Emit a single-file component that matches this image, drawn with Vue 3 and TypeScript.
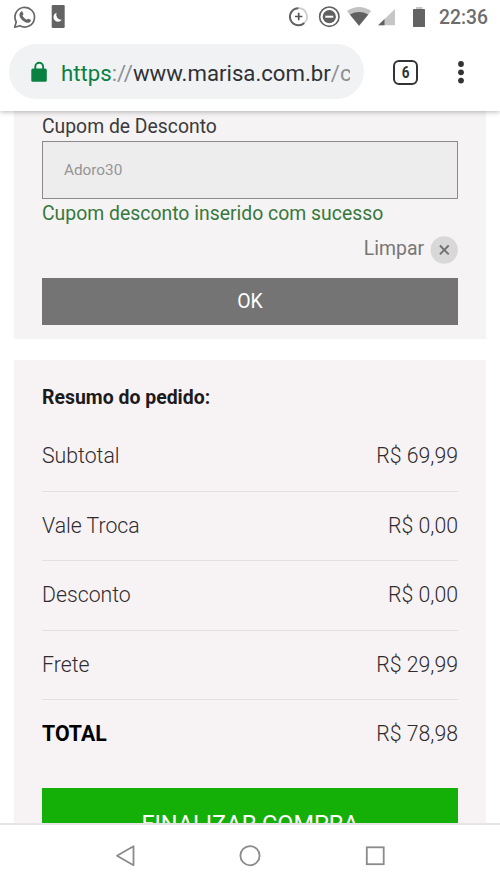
<script setup lang="ts">
import { ref } from 'vue'

interface SummaryRow {
  label: string
  value: string
  total?: boolean
}

const coupon = ref('Adoro30')
const rows: SummaryRow[] = [
  { label: 'Subtotal', value: 'R$ 69,99' },
  { label: 'Vale Troca', value: 'R$ 0,00' },
  { label: 'Desconto', value: 'R$ 0,00' },
  { label: 'Frete', value: 'R$ 29,99' },
  { label: 'TOTAL', value: 'R$ 78,98', total: true },
]
</script>

<template>
  <div class="phone">
    <header class="top">
      <div class="status">
        <svg class="status-left" width="70" height="34" viewBox="0 0 70 34">
          <path d="M14.7 27.2l1.5-5.2a9.8 9.8 0 1 1 3.7 3.7z" fill="none" stroke="#666" stroke-width="1.7" stroke-linejoin="round" />
          <path d="M21.2 11.5c.6-.4 1.1-.2 1.4.4l.8 1.9c.2.5-.1.9-.9 1.8 1 2.1 2.3 3.2 4.4 4.1.8-.9 1-1.2 1.6-1l2 1c.6.3.5.8.1 1.6-.7 1.3-2.2 1.8-3.8 1.4-3.7-1-6.7-4-7.3-7.1-.2-1.7.5-3.3 1.7-4.1z" fill="#666" />
          <rect x="51.7" y="5" width="13" height="23" rx="1.3" fill="#636363" />
          <path d="M56.6 12.7a4.6 4.6 0 1 0 5.2 7 5 5 0 0 1-5.2-7z" fill="#fff" />
        </svg>
        <div class="status-right">
          <svg width="140" height="34" viewBox="0 0 140 34">
            <path d="M9.5 8.2a8.5 8.5 0 0 1 5.8 14.7" fill="none" stroke="#ccc" stroke-width="1.7" />
            <path d="M9.5 8.2a8.5 8.5 0 1 0 5.8 14.7" fill="none" stroke="#606060" stroke-width="2" />
            <path d="M6 16.5h7.4M9.7 12.8v7.4" stroke="#555" stroke-width="1.7" />
            <circle cx="40.3" cy="16.7" r="9.7" fill="none" stroke="#606060" stroke-width="1.6" />
            <circle cx="40.3" cy="16.7" r="6.6" fill="#606060" />
            <path d="M36.3 16.7h8" stroke="#fff" stroke-width="2" />
            <path d="M57.9 11q12.2-8 24.2 0l-12 14.7z" fill="#c2c2c2" />
            <path d="M60.8 14.5q9.3-4.900 18.500 0l-9.200 11.200z" fill="#606060" />
            <path d="M106 9v16.200H89.200z" fill="#c6c6c6" />
            <path d="M95.500 19v6.200h-6.300z" fill="#606060" />
            <path d="M127 7h6.500v4H127z" fill="#c6c6c6" />
            <rect x="124" y="9" width="12" height="18" rx=".6" fill="#636363" />
          </svg>
          <span class="clock">22:36</span>
        </div>
      </div>
      <div class="browser">
        <div class="address">
          <svg width="17" height="22" viewBox="0 0 17 22">
            <path d="M4.300 9V5.600a3.900 3.900 0 0 1 7.800 0V9" fill="none" stroke="#0b8043" stroke-width="1.900" />
            <rect x=".3" y="7.500" width="15.500" height="13.300" rx="1.600" fill="#0b8043" />
          </svg>
          <div class="url"><span class="secure">https</span><span class="dim">://</span>www.marisa.com.br<span class="dim">/c</span></div>
        </div>
        <div class="tabs"><span>6</span></div>
        <svg class="more" width="8" height="26" viewBox="0 0 8 26">
          <circle cx="4" cy="5" r="2.900" fill="#333" />
          <circle cx="4" cy="13.300" r="2.900" fill="#333" />
          <circle cx="4" cy="21.600" r="2.900" fill="#333" />
        </svg>
      </div>
    </header>

    <main class="page">
      <section class="card coupon">
        <label class="label" for="coupon">Cupom de Desconto</label>
        <input id="coupon" v-model="coupon" class="field" type="text" />
        <p class="success">Cupom desconto inserido com sucesso</p>
        <div class="clear">
          <span>Limpar</span>
          <svg width="28" height="28" viewBox="0 0 28 28">
            <circle cx="14.200" cy="14" r="13.700" fill="#d9d8d9" />
            <path d="M9.900 9.500l8.800 8.800M18.700 9.500l-8.800 8.800" stroke="#707070" stroke-width="1.900" />
          </svg>
        </div>
        <button class="ok" type="button">OK</button>
      </section>

      <section class="card summary">
        <h2 class="title">Resumo do pedido:</h2>
        <div v-for="row in rows" :key="row.label" class="row" :class="{ total: row.total }">
          <span class="name">{{ row.label }}</span>
          <span class="value">{{ row.value }}</span>
        </div>
        <button class="checkout" type="button">FINALIZAR COMPRA</button>
      </section>
    </main>

    <nav class="nav">
      <svg width="500" height="64" viewBox="0 0 500 64">
        <path d="M133.500 21.200v19L117 30.700z" fill="none" stroke="#8b8b8b" stroke-width="1.800" stroke-linejoin="round" />
        <circle cx="250" cy="30.700" r="9.600" fill="none" stroke="#8b8b8b" stroke-width="1.800" />
        <rect x="366.800" y="22.300" width="16.900" height="16.900" fill="none" stroke="#8b8b8b" stroke-width="1.800" />
      </svg>
    </nav>
  </div>
</template>

<style>
body {
  margin: 0;
  background: #fff;
}
</style>

<style scoped>
.phone {
  display: flex;
  flex-direction: column;
  width: 500px;
  height: 889px;
  overflow: hidden;
  background: #fff;
  font-family: Roboto, "Liberation Sans", sans-serif;
  color: #2f2b2e;
}
svg {
  display: block;
  flex: none;
}
.top {
  position: relative;
  z-index: 1;
  flex: none;
  height: 111px;
  background: #fff;
  box-shadow: 0 1px 5px rgba(0, 0, 0, 0.28);
}
.status {
  display: flex;
  justify-content: space-between;
  height: 34px;
  padding-right: 12px;
}
.status-right {
  display: flex;
  gap: 10px;
}
.clock {
  width: 49px;
  font-size: 19.3px;
  line-height: 35px;
  font-weight: 500;
  color: #6d6d6d;
  white-space: nowrap;
}
.browser {
  display: flex;
  align-items: center;
  height: 55px;
  padding: 10px 35px 0 9px;
}
.address {
  display: flex;
  align-items: center;
  gap: 13px;
  box-sizing: border-box;
  width: 355px;
  height: 55px;
  padding: 0 14px 0 22px;
  border-radius: 28px;
  background: #f0f2f4;
}
.url {
  flex: 1;
  overflow: hidden;
  padding-top: 2px;
  white-space: nowrap;
  font-size: 22.2px;
  line-height: 30px;
  color: #303134;
}
.secure {
  color: #0b8043;
}
.dim {
  color: #8d9093;
}
.tabs {
  box-sizing: border-box;
  width: 25px;
  height: 25px;
  margin-top: 1px;
  margin-left: 29px;
  border: 2.5px solid #333;
  border-radius: 6px;
  text-align: center;
  font-size: 16.5px;
  line-height: 21px;
  font-weight: 700;
  color: #333;
}
.tabs span {
  display: inline-block;
  transform: scaleX(0.82);
}
.more {
  margin-left: auto;
}
.page {
  flex: 1;
  min-height: 0;
  overflow: hidden;
  display: flex;
  flex-direction: column;
  gap: 21px;
  padding: 0 14px;
}
.card {
  flex: none;
  display: flex;
  flex-direction: column;
  box-sizing: border-box;
  padding: 0 28px;
  background: #f7f3f5;
}
.coupon {
  height: 228px;
  background: #f5f3f4;
}
.label {
  height: 30px;
  font-size: 19.35px;
  line-height: 31px;
  color: #3c3a3c;
}
.field {
  box-sizing: border-box;
  width: 100%;
  height: 58px;
  padding: 0 21px;
  border: 1.5px solid #8b898b;
  border-radius: 0;
  background: #ededed;
  font: 400 15.3px Roboto, sans-serif;
  color: #969496;
  outline: none;
}
.success {
  margin: 0;
  font-size: 19.4px;
  line-height: 29px;
  color: #38783c;
  white-space: nowrap;
}
.clear {
  display: flex;
  justify-content: flex-end;
  gap: 6px;
  margin-top: 8px;
  font-size: 19.4px;
  line-height: 25px;
  color: #777;
}
.ok {
  height: 47px;
  margin-top: 14px;
  padding: 0 0 1px;
  border: 0;
  background: #747474;
  color: #fff;
  font: 400 19.4px Roboto, sans-serif;
}
.summary {
  height: 520px;
}
.title {
  margin: 22px 0 3.5px;
  font-size: 19.45px;
  line-height: 31px;
  font-weight: 700;
  color: #1d1a1c;
}
.row {
  display: flex;
  justify-content: space-between;
  align-items: center;
  box-sizing: border-box;
  height: 69.5px;
  padding-bottom: 1px;
  border-bottom: 1px solid #e2dfe0;
  font-size: 21.25px;
  font-weight: 300;
  white-space: nowrap;
}
.row:first-of-type {
  height: 75px;
  padding-top: 5px;
}
.total {
  border-color: transparent;
}
.total .name {
  font-weight: 700;
  color: #000;
}
.checkout {
  flex: none;
  height: 70px;
  margin-top: 18.5px;
  padding: 1px 0 0;
  border: 0;
  background: #14b007;
  color: #fff;
  font: 400 23.5px Roboto, sans-serif;
}
.nav {
  flex: none;
  height: 64px;
  border-top: 2px solid #e6e4e5;
  background: #fff;
}
</style>
